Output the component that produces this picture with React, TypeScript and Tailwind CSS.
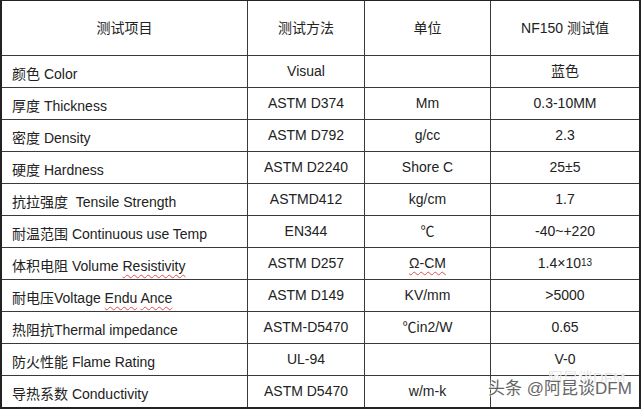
import React from 'react';

type Row = {
  name: React.ReactNode;
  method: string;
  unit: React.ReactNode;
  value: React.ReactNode;
};

const Wavy: React.FC<{ children: React.ReactNode }> = ({ children }) => (
  <span className="underline decoration-wavy decoration-[#e05050] decoration-1 underline-offset-[3px]">{children}</span>
);

const rows: Row[] = [
  { name: '颜色 Color', method: 'Visual', unit: '', value: '蓝色' },
  { name: '厚度 Thickness', method: 'ASTM D374', unit: 'Mm', value: '0.3-10MM' },
  { name: '密度 Density', method: 'ASTM D792', unit: 'g/cc', value: '2.3' },
  { name: '硬度 Hardness', method: 'ASTM D2240', unit: 'Shore C', value: '25±5' },
  { name: '抗拉强度  Tensile Strength', method: 'ASTMD412', unit: 'kg/cm', value: '1.7' },
  { name: '耐温范围 Continuous use Temp', method: 'EN344', unit: '℃', value: '-40~+220' },
  {
    name: (
      <>
        体积电阻 Volume <Wavy>Resistivity</Wavy>
      </>
    ),
    method: 'ASTM D257',
    unit: <Wavy>Ω-CM</Wavy>,
    value: (
      <span>
        1.4×10<sup className="text-[10px] relative -top-[2px]">13</sup>
      </span>
    ),
  },
  {
    name: (
      <>
        耐电压Voltage <Wavy>Endu</Wavy> <Wavy>Ance</Wavy>
      </>
    ),
    method: 'ASTM D149',
    unit: 'KV/mm',
    value: '>5000',
  },
  { name: '热阻抗Thermal impedance', method: 'ASTM-D5470', unit: '℃in2/W', value: '0.65' },
  { name: '防火性能 Flame Rating', method: 'UL-94', unit: '', value: 'V-0' },
  { name: '导热系数 Conductivity', method: 'ASTM D5470', unit: 'w/m-k', value: '' },
];

export default function App() {
  return (
    <div
      className="relative w-[641px] h-[409px] bg-white overflow-hidden text-[14px] text-[#222]"
      style={{ fontFamily: '"Liberation Sans", Arial, "Noto Sans CJK SC", sans-serif' }}
    >
      <div className="grid grid-cols-[245px_116px_125px_148px] gap-px bg-[#3a3a3a] border-t border-l-2 border-r-2 border-b-2 border-[#222]">
        {/* header */}
        <div className="bg-white h-[54px] flex items-center justify-center">测试项目</div>
        <div className="bg-white h-[54px] flex items-center justify-center">测试方法</div>
        <div className="bg-white h-[54px] flex items-center justify-center">单位</div>
        <div className="bg-white h-[54px] flex items-center justify-center">NF150 测试值</div>

        {rows.map((r, i) => (
          <React.Fragment key={i}>
            <div className="bg-white h-[31px] flex items-center pl-[10px] pt-[6px]">
              <span className="whitespace-pre">{r.name}</span>
            </div>
            <div className="bg-white h-[31px] flex items-center justify-center">{r.method}</div>
            <div className="bg-white h-[31px] flex items-center justify-center">{r.unit}</div>
            <div className="bg-white h-[31px] flex items-center justify-center">{r.value}</div>
          </React.Fragment>
        ))}
      </div>

      {/* watermark */}
      <div className="absolute left-[548px] top-[370px] text-[15px] leading-none text-[#e8e8e8] whitespace-nowrap">
        阿昆谈DFM
      </div>
      <div
        className="absolute left-[488px] top-[380px] text-[17px] leading-none text-[#666] whitespace-nowrap"
        style={{ textShadow: '0 0 2px #fff, 0 0 2px #fff, 0 0 3px #fff' }}
      >
        头条 @阿昆谈DFM
      </div>
    </div>
  );
}
